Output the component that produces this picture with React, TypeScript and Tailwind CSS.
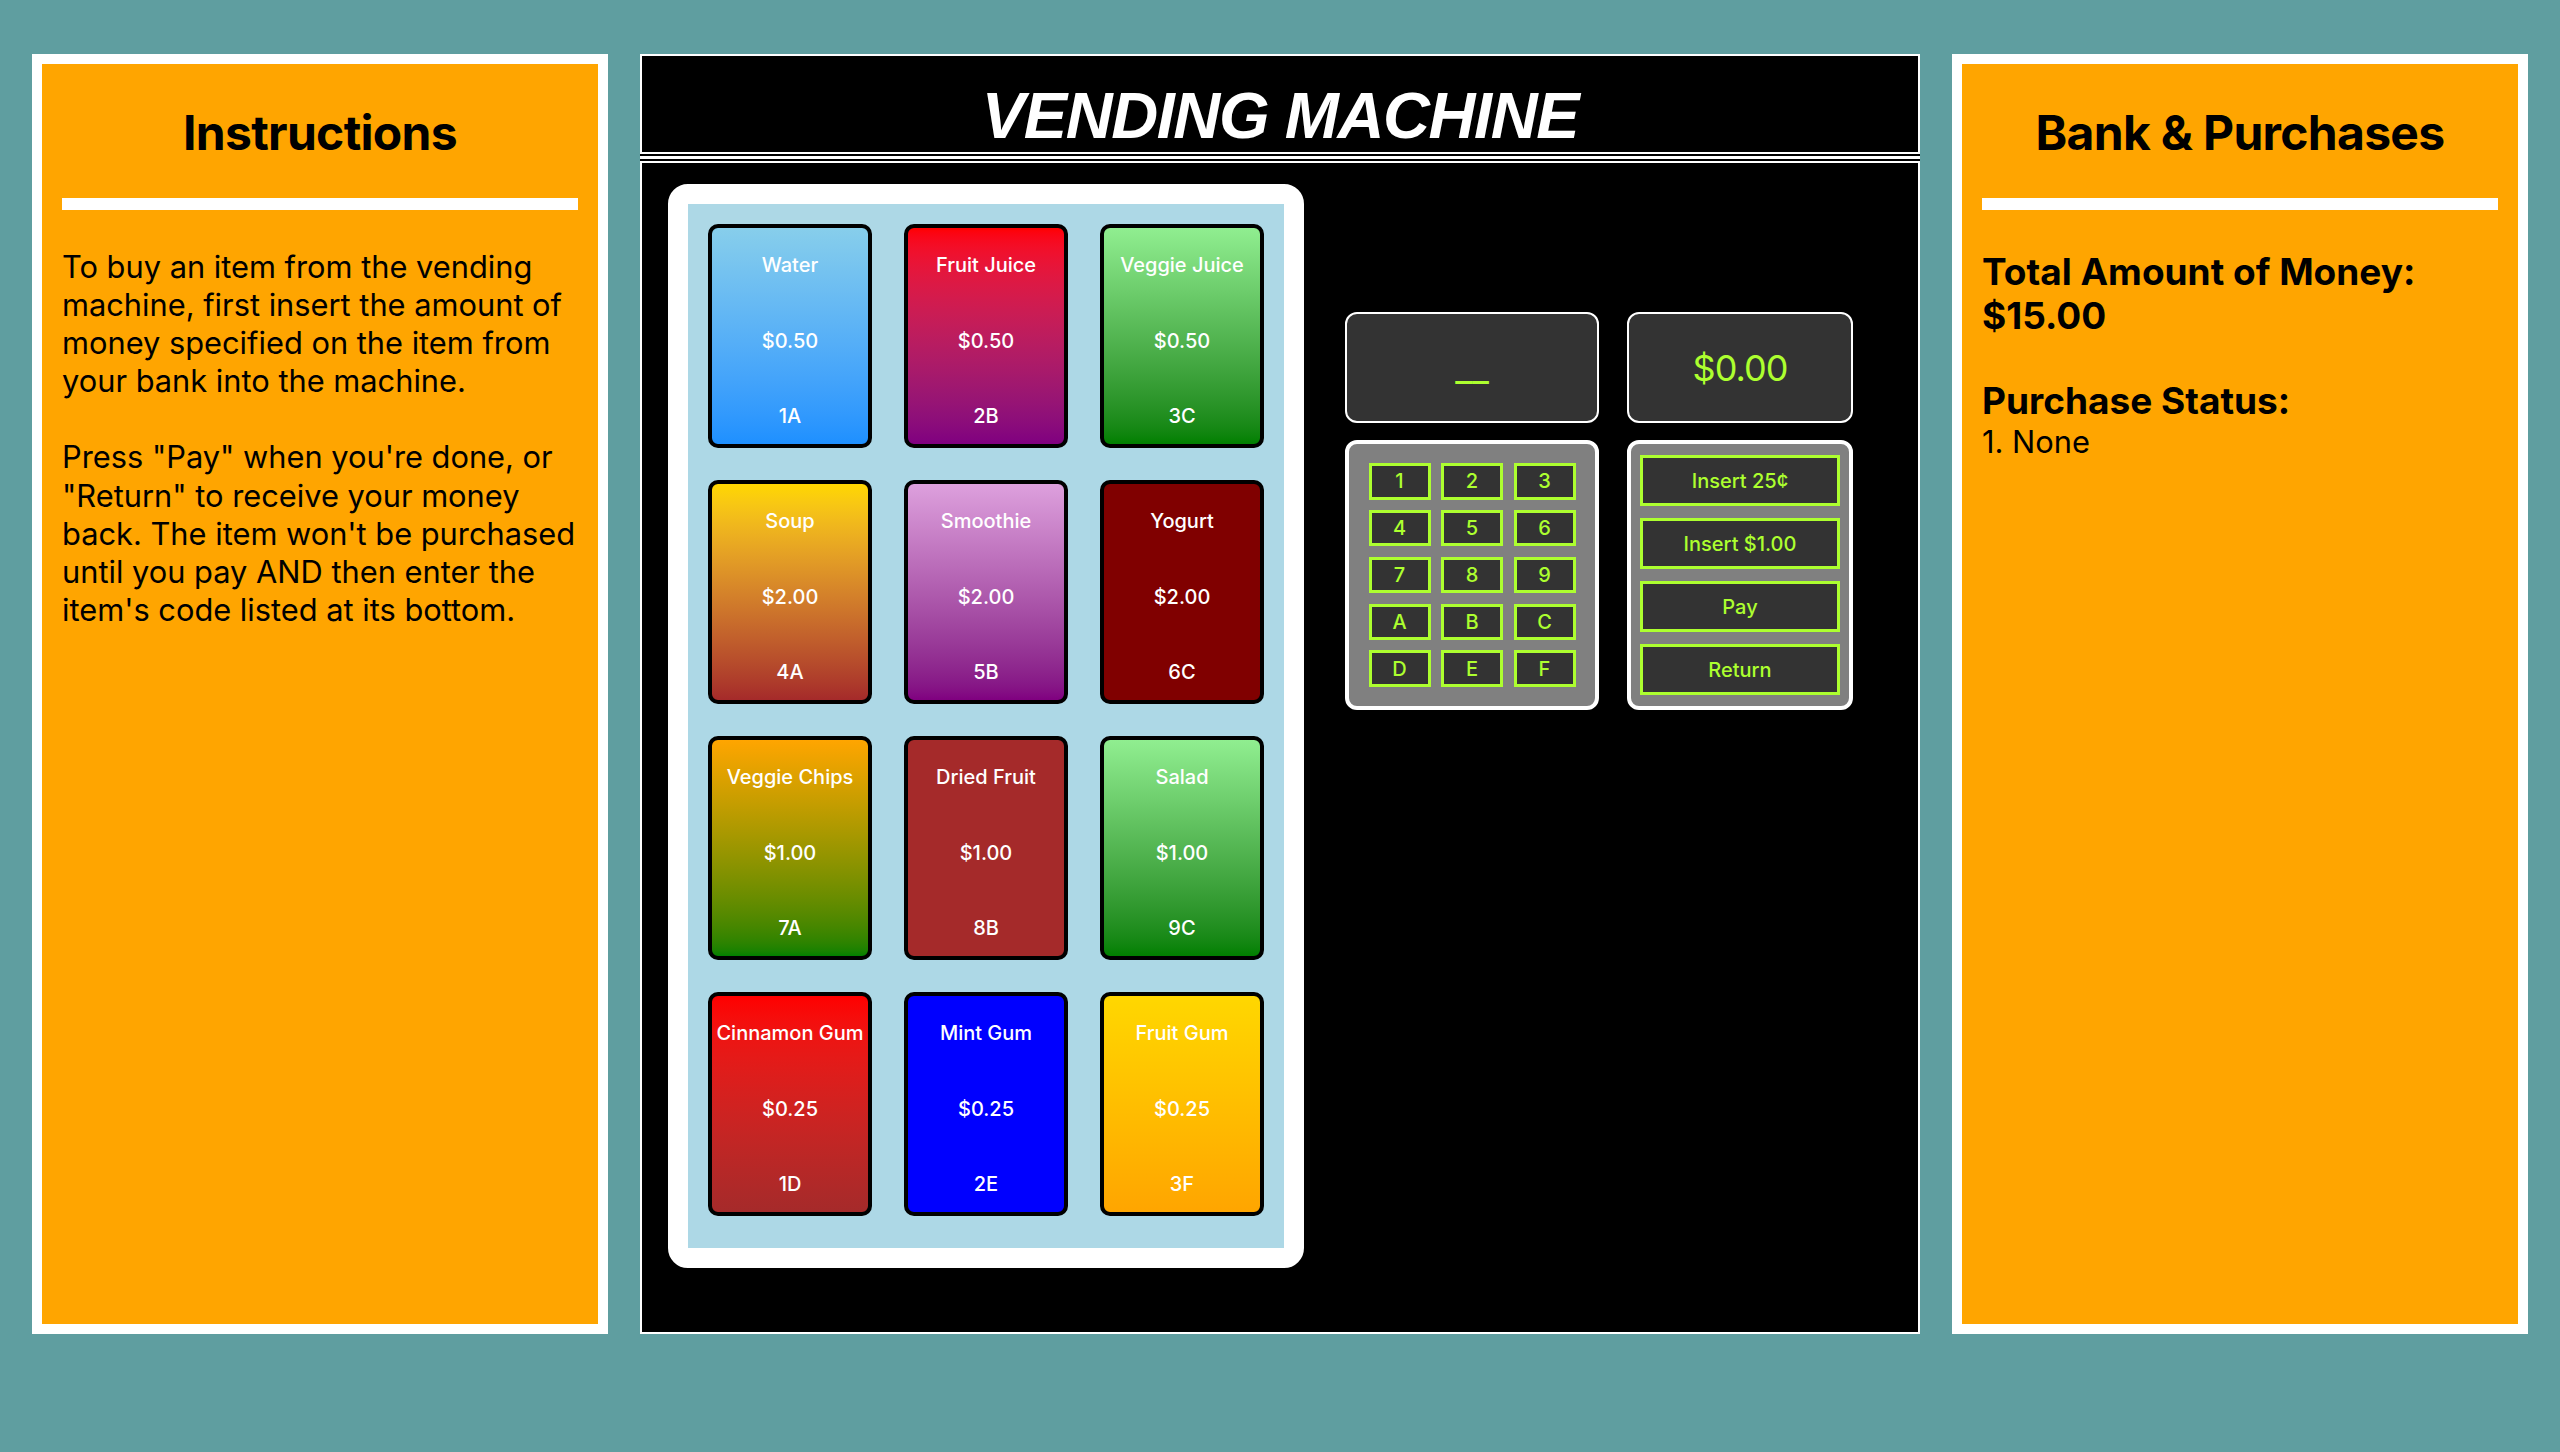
import React from 'react'

type Item = {
  name: string
  price: string
  code: string
  bg: string
}

const items: Item[] = [
  { name: 'Water', price: '$0.50', code: '1A', bg: 'bg-linear-to-b from-[#87ceeb] to-[#1e90ff]' },
  { name: 'Fruit Juice', price: '$0.50', code: '2B', bg: 'bg-linear-to-b from-[#ff0000] to-[#800080]' },
  { name: 'Veggie Juice', price: '$0.50', code: '3C', bg: 'bg-linear-to-b from-[#90ee90] to-[#008000]' },
  { name: 'Soup', price: '$2.00', code: '4A', bg: 'bg-linear-to-b from-[#ffd700] to-[#a52a2a]' },
  { name: 'Smoothie', price: '$2.00', code: '5B', bg: 'bg-linear-to-b from-[#dda0dd] to-[#800080]' },
  { name: 'Yogurt', price: '$2.00', code: '6C', bg: 'bg-[#800000]' },
  { name: 'Veggie Chips', price: '$1.00', code: '7A', bg: 'bg-linear-to-b from-[#ffa500] to-[#008000]' },
  { name: 'Dried Fruit', price: '$1.00', code: '8B', bg: 'bg-[#a52a2a]' },
  { name: 'Salad', price: '$1.00', code: '9C', bg: 'bg-linear-to-b from-[#90ee90] to-[#008000]' },
  { name: 'Cinnamon Gum', price: '$0.25', code: '1D', bg: 'bg-linear-to-b from-[#ff0000] to-[#a52a2a]' },
  { name: 'Mint Gum', price: '$0.25', code: '2E', bg: 'bg-[#0000ff]' },
  { name: 'Fruit Gum', price: '$0.25', code: '3F', bg: 'bg-linear-to-b from-[#ffd700] to-[#ffa500]' },
]

const keys = ['1', '2', '3', '4', '5', '6', '7', '8', '9', 'A', 'B', 'C', 'D', 'E', 'F']
const actions = ['Insert 25¢', 'Insert $1.00', 'Pay', 'Return']

const ItemCard = ({ item }: { item: Item }) => (
  <div
    className={`h-[224px] border-4 border-black rounded-[10px] ${item.bg} flex flex-col items-center justify-between pt-[25px] pb-[16px] text-white text-[20px] leading-6 font-medium whitespace-nowrap`}
  >
    <p>{item.name}</p>
    <p>{item.price}</p>
    <p>{item.code}</p>
  </div>
)

const App = () => {
  return (
    <div className="min-h-screen w-full bg-[#5f9ea0] flex items-start gap-8 px-8 pt-[54px] font-[Inter,sans-serif] text-black">
      {/* instructions */}
      <div className="w-[576px] h-[1280px] shrink-0 border-[10px] border-white bg-[#ffa500] px-5">
        <h2 className="mt-[39.5px] text-center text-[48px] leading-[58px] font-bold tracking-[-0.7px]">Instructions</h2>
        <div className="mt-[36.5px] h-[12px] bg-white" />
        <div className="mt-[38px] text-[30.8px] leading-[38.1px]">
          <p>
            To buy an item from the vending machine, first insert the amount of money specified on the item from
            your bank into the machine.
          </p>
          <p className="mt-[38.1px]">
            Press "Pay" when you're done, or "Return" to receive your money back. The item won't be purchased
            until you pay AND then enter the item's code listed at its bottom.
          </p>
        </div>
      </div>

      {/* machine */}
      <div className="w-[1280px] h-[1280px] shrink-0 bg-black flex flex-col">
        <div className="h-[100px] border-2 border-white pt-[27px] text-center">
          <h1 className="font-['Liberation_Sans',Arial,sans-serif] italic font-bold text-white text-[65px] leading-[65px] tracking-[-1.4px]">
            VENDING MACHINE
          </h1>
        </div>
        <div className="mt-[2px] h-[3px] bg-white" />
        <div className="mt-[2px] flex-1 border-2 border-white flex items-start">
          <div className="ml-[26px] mt-[21px] border-[20px] border-white rounded-[20px] bg-[#add8e6] px-5 pt-5 pb-8 grid grid-cols-[repeat(3,164px)] gap-8">
            {items.map((item) => (
              <ItemCard key={item.code} item={item} />
            ))}
          </div>

          <div className="ml-[41px] mt-[149px] grid grid-cols-[254px_226px] grid-rows-[111px_270px] gap-x-[28px] gap-y-[17px] text-[#adff2f]">
            <div className="border-2 border-white rounded-[12px] bg-[#333333] flex items-center justify-center text-[37px]">
              __
            </div>
            <div className="border-2 border-white rounded-[12px] bg-[#333333] flex items-center justify-center text-[36px] tracking-[-1px]">
              $0.00
            </div>
            <div className="border-4 border-white rounded-[12px] bg-[#808080] flex items-center justify-center">
              <div className="grid grid-cols-[repeat(3,62px)] auto-rows-[36.5px] gap-x-[10.5px] gap-y-[10.3px]">
                {keys.map((k) => (
                  <button
                    key={k}
                    className="border-[3px] border-[#adff2f] bg-[#333333] text-[20px] font-medium leading-none flex items-center justify-center"
                  >
                    {k}
                  </button>
                ))}
              </div>
            </div>
            <div className="border-4 border-white rounded-[12px] bg-[#808080] flex flex-col items-center justify-center gap-[12.5px]">
              {actions.map((a) => (
                <button
                  key={a}
                  className="w-[200px] h-[50.5px] border-[3px] border-[#adff2f] bg-[#333333] text-[20px] font-medium flex items-center justify-center"
                >
                  {a}
                </button>
              ))}
            </div>
          </div>
        </div>
      </div>

      {/* bank */}
      <div className="w-[576px] h-[1280px] shrink-0 border-[10px] border-white bg-[#ffa500] px-5">
        <h2 className="mt-[39.5px] text-center text-[48px] leading-[58px] font-bold tracking-[-0.7px]">Bank &amp; Purchases</h2>
        <div className="mt-[36.5px] h-[12px] bg-white" />
        <p className="mt-[40px] text-[37px] leading-[44px] font-bold">
          Total Amount of Money:
          <br />
          $15.00
        </p>
        <p className="mt-[41px] text-[37px] leading-[44px] font-bold">Purchase Status:</p>
        <p className="text-[30.8px] leading-[37px]">1. None</p>
      </div>
    </div>
  )
}

export default App
